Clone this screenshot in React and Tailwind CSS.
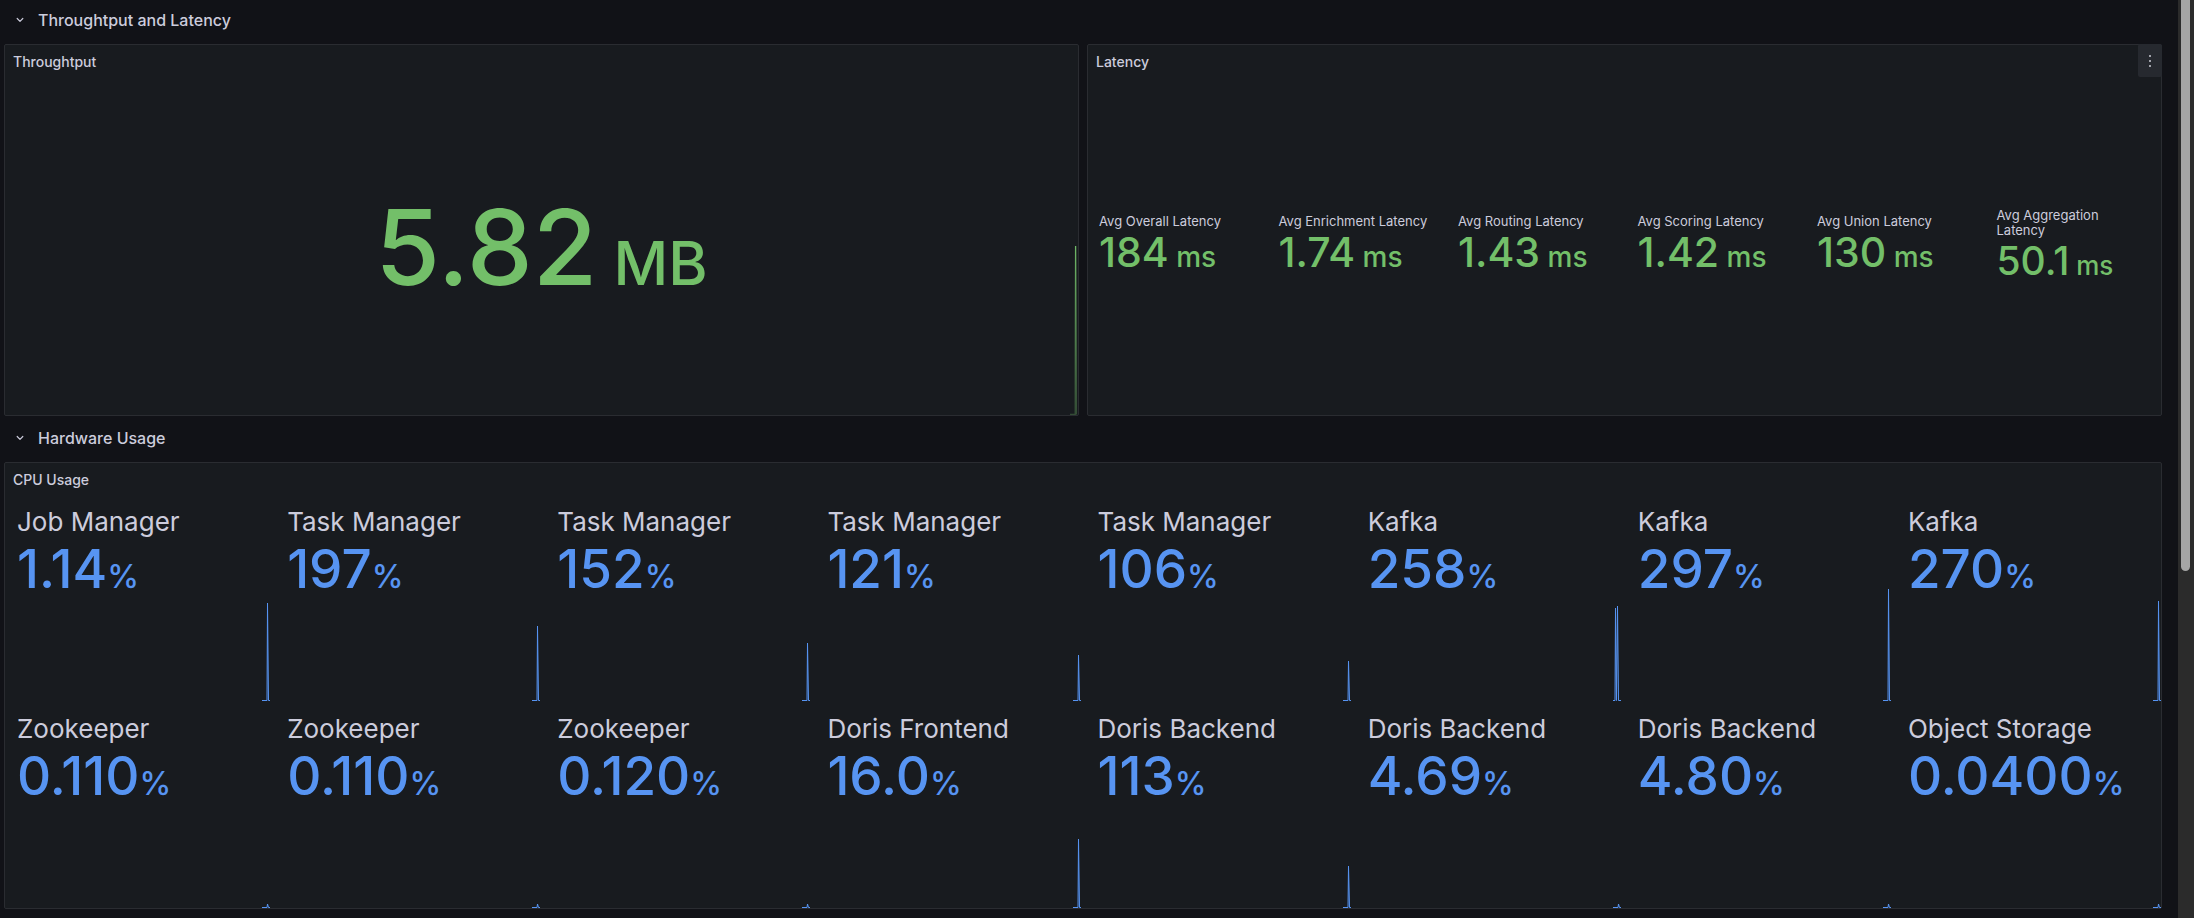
import clsx from "clsx";

const GREEN = "#73bf69";
const BLUE = "#5794f2";

const latency = [
  { label: ["Avg Overall Latency"], value: "184" },
  { label: ["Avg Enrichment Latency"], value: "1.74" },
  { label: ["Avg Routing Latency"], value: "1.43" },
  { label: ["Avg Scoring Latency"], value: "1.42" },
  { label: ["Avg Union Latency"], value: "130" },
  { label: ["Avg Aggregation", "Latency"], value: "50.1", small: true },
];

// name, value, spike height (px) at the end of the sparkline
const cpu = [
  ["Job Manager", "1.14", 97],
  ["Task Manager", "197", 74],
  ["Task Manager", "152", 57],
  ["Task Manager", "121", 45],
  ["Task Manager", "106", 39],
  ["Kafka", "258", 94, true],
  ["Kafka", "297", 111],
  ["Kafka", "270", 99],
  ["Zookeeper", "0.110", 3],
  ["Zookeeper", "0.110", 3],
  ["Zookeeper", "0.120", 3],
  ["Doris Frontend", "16.0", 68],
  ["Doris Backend", "113", 41],
  ["Doris Backend", "4.69", 3],
  ["Doris Backend", "4.80", 3],
  ["Object Storage", "0.0400", 3],
];

function Chevron() {
  return (
    <svg width="8" height="6" viewBox="0 0 8 6" className="shrink-0">
      <path d="M1.2 1.5 L4 4.3 L6.8 1.5" fill="none" stroke="#ccccdc" strokeWidth="1.2" strokeLinecap="round" strokeLinejoin="round" />
    </svg>
  );
}

function RowHeader({ title, className }) {
  return (
    <div className={clsx("flex h-[40px] items-center gap-[14px] pl-[12px]", className)}>
      <Chevron />
      <span className="text-[16px] font-medium text-[#ccccdc]">{title}</span>
    </div>
  );
}

function Panel({ title, className, menu, children }) {
  return (
    <div className={clsx("relative flex flex-col rounded-[2px] border border-[#2a2c31] bg-[#181b1f]", className)}>
      <div className="flex h-[32px] shrink-0 items-center pl-[8px]">
        <span className="text-[14px] font-medium text-[#ccccdc]">{title}</span>
      </div>
      {menu && (
        <div className="absolute -right-px -top-px flex h-[33px] w-[24px] flex-col items-center justify-center gap-[3px] rounded-[2px] bg-[#26292f]">
          <span className="h-[2px] w-[2px] bg-[#a0a2aa]" />
          <span className="h-[2px] w-[2px] bg-[#a0a2aa]" />
          <span className="h-[2px] w-[2px] bg-[#a0a2aa]" />
        </div>
      )}
      {children}
    </div>
  );
}

function Spike({ h, color, id, double }) {
  const H = h + 2;
  const d = double
    ? `M0 ${H - 0.5} H2 L2.5 3 L3.5 ${H - 0.5} L4.5 1 L5.5 ${H - 0.5} H8`
    : `M0 ${H - 0.5} H5 L5.5 1 L6.5 ${H - 0.5} H8`;
  return (
    <svg width="8" height={H} viewBox={`0 0 8 ${H}`} className="pointer-events-none absolute bottom-0 right-0">
      <defs>
        <linearGradient id={id} x1="0" y1="0" x2="0" y2="1">
          <stop offset="0" stopColor={color} stopOpacity="0.35" />
          <stop offset="1" stopColor={color} stopOpacity="0" />
        </linearGradient>
      </defs>
      <path d={`${d} V${H} H0 Z`} fill={`url(#${id})`} />
      <path d={d} fill="none" stroke={color} strokeWidth="1" />
    </svg>
  );
}

function ThroughputPanel() {
  return (
    <Panel title="Throughtput" className="flex-1">
      <div className="relative flex flex-1 items-center justify-center">
        <span className="text-[105px] font-medium leading-none text-[#73bf69]">
          5.82<span className="text-[60px]"> MB</span>
        </span>
        <svg width="8" height="170" viewBox="0 0 8 170" className="pointer-events-none absolute bottom-0 right-0">
          <defs>
            <linearGradient id="tp" x1="0" y1="0" x2="0" y2="1">
              <stop offset="0" stopColor={GREEN} stopOpacity="0.95" />
              <stop offset="1" stopColor={GREEN} stopOpacity="0.3" />
            </linearGradient>
          </defs>
          <path d="M0 169.5 H5.2 L5.6 1 L6.4 169.5" fill="none" stroke="url(#tp)" strokeWidth="1.3" />
        </svg>
      </div>
    </Panel>
  );
}

function LatencyPanel() {
  return (
    <Panel title="Latency" className="flex-1" menu>
      <div className="flex flex-1 gap-[4px]">
        {latency.map((s, i) => (
          <div key={i} className="flex flex-1 flex-col justify-center pl-[11px]">
            <div className="text-[13px] leading-[15px] text-[#ccccdc]">
              {s.label.map((l) => (
                <div key={l} className="whitespace-nowrap">{l}</div>
              ))}
            </div>
            <div className={clsx("mt-[3px] whitespace-nowrap font-medium text-[#73bf69]", s.small ? "text-[39px] leading-[39px]" : "text-[41px] leading-[41px]")}>
              {s.value}
              <span className={s.small ? "text-[26px]" : "text-[28px]"}> ms</span>
            </div>
          </div>
        ))}
      </div>
    </Panel>
  );
}

function CpuPanel() {
  return (
    <Panel title="CPU Usage" className="h-[447px]">
      <div className="grid flex-1 grid-cols-8 grid-rows-[206px_206px] gap-x-[5px] gap-y-[1px]">
        {cpu.map(([name, value, spike, double], i) => (
          <div key={i} className="relative pl-[12px] pt-[12px]">
            <div className="whitespace-nowrap text-[26px] leading-[30px] text-[#ccccdc]">{name}</div>
            <div className="mt-[5px] whitespace-nowrap text-[53px] font-medium leading-[54px] text-[#5794f2]">
              {value}
              <span className="text-[32px]">%</span>
            </div>
            <Spike h={spike} color={BLUE} id={`cpu${i}`} double={double} />
          </div>
        ))}
      </div>
    </Panel>
  );
}

export default function App() {
  return (
    <div className="flex h-[918px] w-full overflow-hidden bg-[#111217] font-[family-name:Inter,'Noto_Sans',sans-serif]">
      <div className="flex min-w-0 flex-1 flex-col pl-[4px] pr-[16px]">
        <RowHeader title="Throughtput and Latency" className="mb-[4px]" />
        <div className="flex h-[372px] gap-[8px]">
          <ThroughputPanel />
          <LatencyPanel />
        </div>
        <RowHeader title="Hardware Usage" className="mb-[4px] mt-[2px]" />
        <CpuPanel />
      </div>
      <div className="w-[16px] shrink-0 bg-[#2b2b2b] pl-[3px]">
        <div className="h-[571px] w-[9px] rounded-b-[5px] bg-[#a5a5a5]" />
      </div>
    </div>
  );
}
